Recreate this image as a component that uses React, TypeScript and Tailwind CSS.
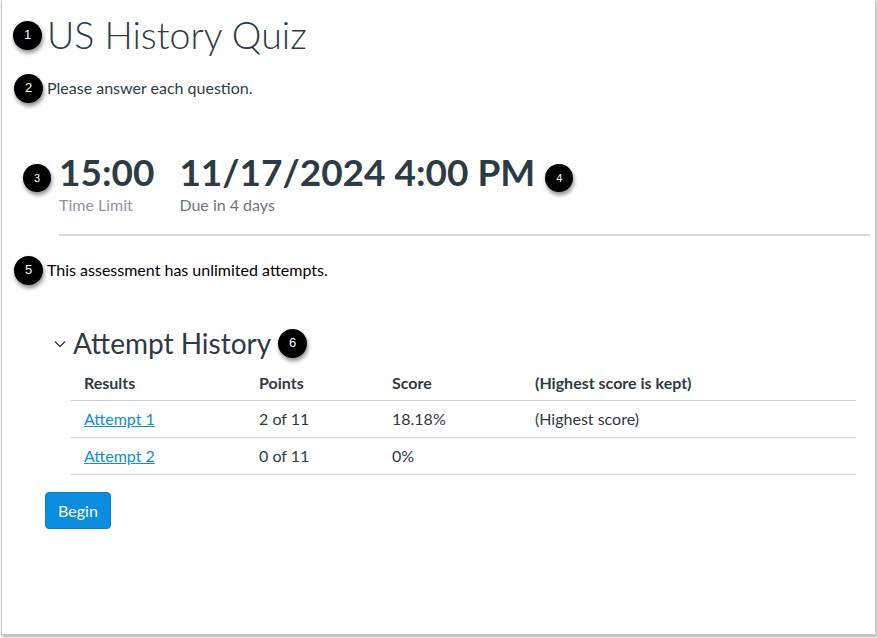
import React from "react";

function Badge({ n, small }: { n: number; small?: boolean }) {
  return (
    <div
      className={
        small
          ? "w-[28px] h-[28px] shrink-0 rounded-full bg-black text-white text-[11px] flex items-center justify-center shadow-[1px_3px_4px_rgba(0,0,0,0.45)]"
          : "w-[29px] h-[29px] shrink-0 rounded-full bg-black text-white text-[13px] flex items-center justify-center shadow-[1px_3px_4px_rgba(0,0,0,0.45)]"
      }
      style={{ fontFamily: "Arial, 'Liberation Sans', sans-serif" }}
    >
      {n}
    </div>
  );
}

const attempts = [
  { name: "Attempt 1", points: "2 of 11", score: "18.18%", note: "(Highest score)" },
  { name: "Attempt 2", points: "0 of 11", score: "0%", note: "" },
];

export default function App() {
  return (
    <div className="w-[877px] h-[638px] bg-white" style={{ fontFamily: "Lato, 'Open Sans', sans-serif" }}>
      <div className="w-[875px] h-[635px] ml-[1px] border-x border-b border-[#c9c9c9] shadow-[1px_2px_3px_rgba(0,0,0,0.3)] flex flex-col text-[#2d3b45]">
        {/* title */}
        <div className="flex items-center h-[50px] mt-[10px] pl-[11px] gap-[5px]">
          <Badge n={1} />
          <h1 className="text-[37.5px] font-light leading-[50px]">US History Quiz</h1>
        </div>

        <div className="flex items-center h-[24px] mt-[16px] pl-[12px] gap-[4px]">
          <Badge n={2} />
          <p className="text-[16px] leading-[24px]">Please answer each question.</p>
        </div>

        {/* time limit and due date */}
        <div className="flex items-start mt-[52px] pl-[21px]">
          <div className="mt-[12px] mr-[8px]">
            <Badge n={3} small />
          </div>
          <div className="flex flex-col">
            <span className="text-[37px] font-bold leading-[40px]">15:00</span>
            <span className="text-[16px] leading-[20px] mt-[3px] text-[#8b969e]">Time Limit</span>
          </div>
          <div className="flex flex-col ml-[25px]">
            <span className="text-[37px] font-bold leading-[40px]">11/17/2024 4:00 PM</span>
            <span className="text-[16px] leading-[20px] mt-[3px] text-[#6b7780]">Due in 4 days</span>
          </div>
          <div className="mt-[12px] ml-[10px]">
            <Badge n={4} small />
          </div>
        </div>

        <div className="h-[2px] bg-[#d5dadd] mt-[19px] ml-[57px] mr-[5px]" />

        <div className="flex items-center h-[24px] mt-[22px] pl-[12px] gap-[4px]">
          <Badge n={5} />
          <p className="text-[16px] leading-[24px] text-black">This assessment has unlimited attempts.</p>
        </div>

        {/* attempt history */}
        <div className="flex items-center h-[40px] mt-[41px] pl-[52px]">
          <svg width="12" height="8" viewBox="0 0 12 8" className="mr-[7px] mt-[1px]">
            <polyline points="1,1.5 6,6.5 11,1.5" fill="none" stroke="#2d3b45" strokeWidth="1.3" />
          </svg>
          <h2 className="text-[28px] leading-[40px]">Attempt History</h2>
          <div className="ml-[7px]">
            <Badge n={6} />
          </div>
        </div>

        <div className="ml-[69px] w-[785px] mt-[2px] text-[16px]">
          <div className="grid grid-cols-[175px_133px_143px_1fr] h-[36px] items-center font-bold border-b border-[#c7cdd1]">
            <span className="px-[13px]">Results</span>
            <span className="px-[13px]">Points</span>
            <span className="px-[13px]">Score</span>
            <span className="px-[13px]">(Highest score is kept)</span>
          </div>
          {attempts.map((a) => (
            <div
              key={a.name}
              className="grid grid-cols-[175px_133px_143px_1fr] h-[37px] items-center border-b border-[#c7cdd1]"
            >
              <span className="px-[13px]">
                <a href="#" className="text-[#0e8de0] underline">
                  {a.name}
                </a>
              </span>
              <span className="px-[13px]">{a.points}</span>
              <span className="px-[13px]">{a.score}</span>
              <span className="px-[13px]">{a.note}</span>
            </div>
          ))}
        </div>

        <div className="mt-[17px] pl-[43px]">
          <button className="w-[66px] h-[37px] rounded-[4px] bg-[#0b8de0] border border-[#0a7fcb] text-white text-[16px]">
            Begin
          </button>
        </div>
      </div>
    </div>
  );
}
